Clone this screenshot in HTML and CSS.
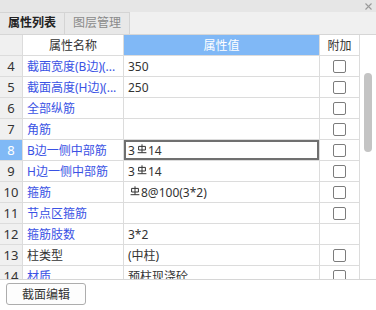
FILE: index.html
```html
<!DOCTYPE html>
<html lang="zh-CN">
<head>
<meta charset="utf-8">
<title>属性列表</title>
<link rel="stylesheet" href="styles.css">
</head>
<body>
<div class="panel">
  <div class="titlebar">
    <svg class="close" width="7" height="7" viewBox="0 0 7 7"><path d="M0.5 0.5L6.5 6.5M6.5 0.5L0.5 6.5" stroke="#9a9a9a" stroke-width="1.1"/></svg>
  </div>
  <div class="tabs">
    <div class="tab active">属性列表</div>
    <div class="tab">图层管理</div>
  </div>
  <div class="grid-wrap">
    <div class="grid">
      <div class="row head">
        <div class="c num"></div>
        <div class="c name">属性名称</div>
        <div class="c val">属性值</div>
        <div class="c add">附加</div>
      </div>
      <div class="row">
        <div class="c num">4</div>
        <div class="c name">截面宽度(B边)(...</div>
        <div class="c val">350</div>
        <div class="c add"><span class="cb"></span></div>
      </div>
      <div class="row">
        <div class="c num">5</div>
        <div class="c name">截面高度(H边)(...</div>
        <div class="c val">250</div>
        <div class="c add"><span class="cb"></span></div>
      </div>
      <div class="row">
        <div class="c num">6</div>
        <div class="c name">全部纵筋</div>
        <div class="c val"></div>
        <div class="c add"><span class="cb"></span></div>
      </div>
      <div class="row">
        <div class="c num">7</div>
        <div class="c name">角筋</div>
        <div class="c val"></div>
        <div class="c add"><span class="cb"></span></div>
      </div>
      <div class="row">
        <div class="c num on">8</div>
        <div class="c name">B边一侧中部筋</div>
        <div class="c val edit">3<svg class="rb" width="10" height="10" viewBox="0 0 10 10"><path d="M5 0.3V8.7M1.6 2.4H8.4V6H1.6ZM0.6 8.7H9.4" fill="none" stroke="#333" stroke-width="1"/></svg>14</div>
        <div class="c add"><span class="cb"></span></div>
      </div>
      <div class="row">
        <div class="c num">9</div>
        <div class="c name">H边一侧中部筋</div>
        <div class="c val">3<svg class="rb" width="10" height="10" viewBox="0 0 10 10"><path d="M5 0.3V8.7M1.6 2.4H8.4V6H1.6ZM0.6 8.7H9.4" fill="none" stroke="#333" stroke-width="1"/></svg>14</div>
        <div class="c add"><span class="cb"></span></div>
      </div>
      <div class="row">
        <div class="c num">10</div>
        <div class="c name">箍筋</div>
        <div class="c val"><svg class="rb first" width="10" height="10" viewBox="0 0 10 10"><path d="M5 0.3V8.7M1.6 2.4H8.4V6H1.6ZM0.6 8.7H9.4" fill="none" stroke="#333" stroke-width="1"/></svg>8@100(3*2)</div>
        <div class="c add"><span class="cb"></span></div>
      </div>
      <div class="row">
        <div class="c num">11</div>
        <div class="c name">节点区箍筋</div>
        <div class="c val"></div>
        <div class="c add"><span class="cb"></span></div>
      </div>
      <div class="row">
        <div class="c num">12</div>
        <div class="c name">箍筋肢数</div>
        <div class="c val">3*2</div>
        <div class="c add"></div>
      </div>
      <div class="row">
        <div class="c num">13</div>
        <div class="c name plain">柱类型</div>
        <div class="c val">(中柱)</div>
        <div class="c add"><span class="cb"></span></div>
      </div>
      <div class="row">
        <div class="c num">14</div>
        <div class="c name">材质</div>
        <div class="c val">预柱现浇砼</div>
        <div class="c add"><span class="cb"></span></div>
      </div>
    </div>
    <div class="scroll"><div class="thumb"></div></div>
  </div>
  <div class="footer">
    <button class="btn" type="button">截面编辑</button>
  </div>
</div>
</body>
</html>
```
FILE: styles.css
```css
html, body {
  margin: 0;
  padding: 0;
}
body {
  width: 376px;
  height: 310px;
  overflow: hidden;
  background: #ffffff;
  font-family: "Noto Sans", "Noto Sans CJK SC", sans-serif;
  font-size: 12px;
  color: #333333;
}
.panel {
  display: flex;
  flex-direction: column;
  height: 310px;
}
.titlebar {
  height: 12px;
  background: #e6e6e6;
  display: flex;
  justify-content: flex-end;
  align-items: center;
  padding-right: 4px;
  box-sizing: border-box;
}
.close {
  display: block;
}
.tabs {
  height: 22px;
  background: #f0f0f0;
  display: flex;
}
.tab {
  width: 65px;
  box-sizing: border-box;
  border-top: 1px solid #d4d4d4;
  border-right: 1px solid #d4d4d4;
  background: #e8e8e8;
  color: #8a8a8a;
  text-align: center;
  line-height: 20px;
  font-size: 12px;
}
.tab.active {
  color: #222222;
  font-weight: 600;
}
.grid-wrap {
  display: flex;
  height: 246px;
  box-sizing: border-box;
  border-top: 1px solid #d6d6d6;
  border-bottom: 1px solid #d6d6d6;
  background: #ffffff;
}
.grid {
  width: 360px;
  overflow: hidden;
}
.row {
  display: grid;
  grid-template-columns: 23px 101px 196px 40px;
  height: 21px;
}
.c {
  box-sizing: border-box;
  border-right: 1px solid #dcdcdc;
  border-bottom: 1px solid #dcdcdc;
  display: flex;
  align-items: center;
  padding: 0 4px;
  white-space: nowrap;
  overflow: hidden;
  min-width: 0;
}
.num {
  background: #f0f0f0;
  justify-content: center;
  padding: 0;
  font-size: 13px;
  color: #333333;
}
.num.on {
  background: #80b9f6;
  color: #ffffff;
}
.name {
  color: #3a52e4;
}
.name.plain {
  color: #333333;
}
.val {
  color: #333333;
}
.val.edit {
  box-shadow: inset 0 0 0 2px #707070;
}
.rb {
  margin: 0 1px 3px 2px;
  flex: none;
}
.rb.first {
  margin-left: 2px;
}
.add {
  justify-content: center;
  padding: 0;
}
.head .c {
  justify-content: center;
  color: #333333;
}
.head .val {
  background: #80b8f6;
  color: #ffffff;
}
.cb {
  width: 13px;
  height: 13px;
  box-sizing: border-box;
  border: 1px solid #7c7c7c;
  border-radius: 2px;
  background: #ffffff;
}
.scroll {
  flex: 1;
  padding-top: 38px;
}
.thumb {
  margin-left: 4px;
  width: 8px;
  height: 79px;
  border-radius: 4px;
  background: #c4c4c4;
}
.footer {
  flex: 1;
  padding: 3px 6px 0;
}
.btn {
  width: 80px;
  height: 22px;
  border: 1px solid #adadad;
  border-radius: 3px;
  background: #fdfdfd;
  font-family: "Noto Sans", "Noto Sans CJK SC", sans-serif;
  font-size: 12px;
  color: #333333;
  padding: 0;
}
```
